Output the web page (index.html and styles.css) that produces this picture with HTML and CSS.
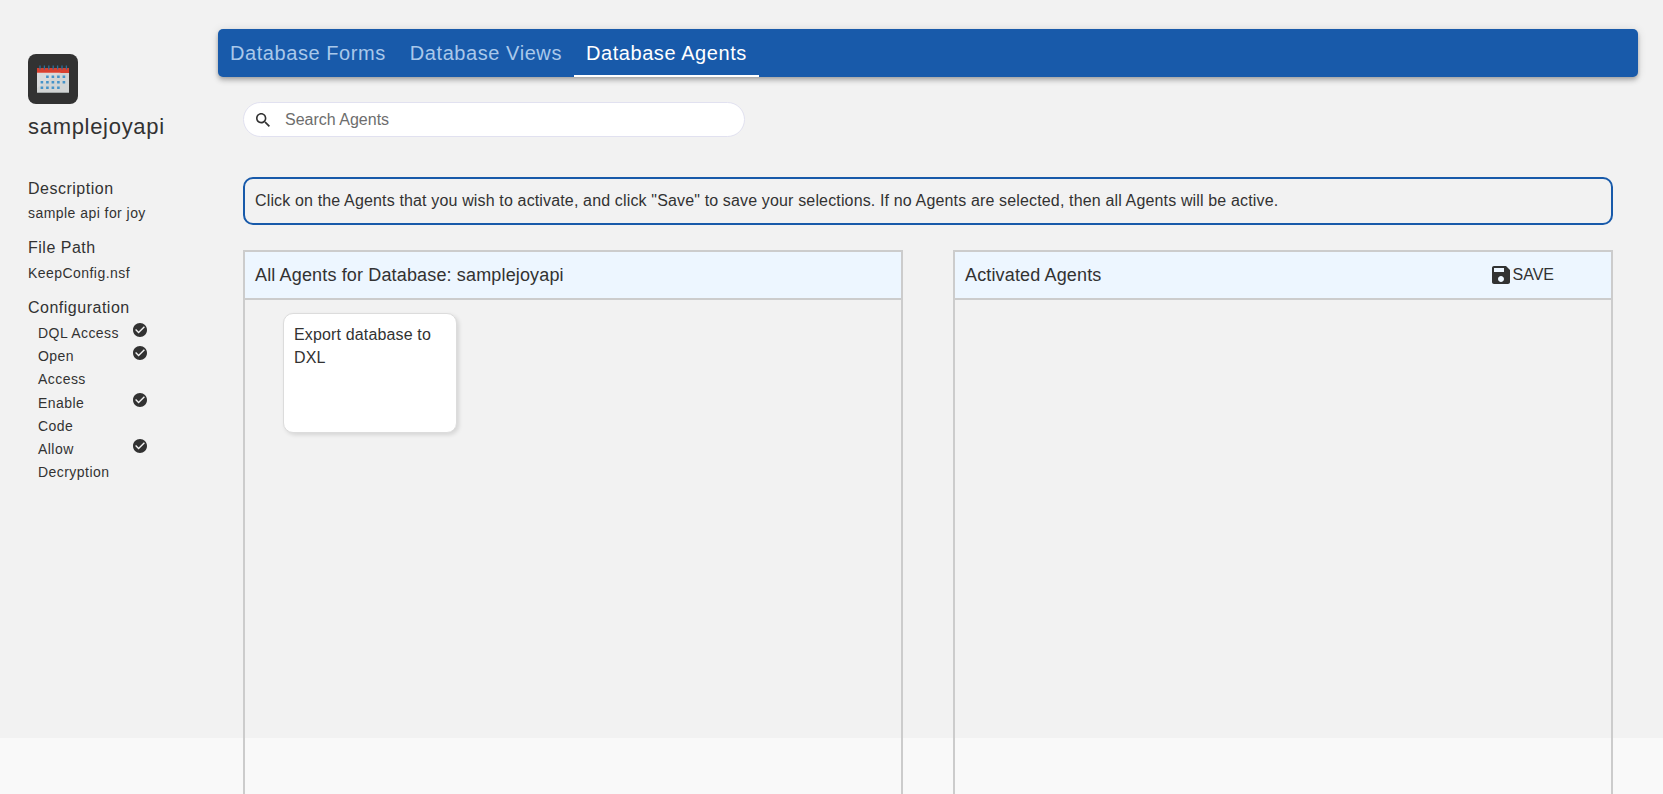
FILE: index.html
```html
<!DOCTYPE html>
<html lang="en">
<head>
<meta charset="utf-8">
<title>Database Agents</title>
<link rel="stylesheet" href="styles.css">
</head>
<body>
<div class="page">
  <aside class="sidebar">
    <div class="app-icon">
      <svg viewBox="0 0 32 28" width="32" height="28">
        <path fill="#dadbdc" d="M0 7h32v20H0z"/>
        <path fill="#cdcecf" d="M24 7h8v20H0v-4z" opacity=".6"/>
        <path fill="#d9402f" d="M0 3h32v5H0z"/>
        <path fill="#e2685b" d="M0 7h24l-1 1H0z"/>
        <path fill="#a3a8a8" d="M0 27h32v1H0z"/>
        <path stroke="#2c6f9c" stroke-width="1.3" d="M3 .5v4M7.4 .5v4M11.8 .5v4M16.2 .5v4M20.6 .5v4M25 .5v4M29.4 .5v4"/>
        <path stroke="#4593c9" stroke-width="2.6" stroke-dasharray="2.6 2.9" d="M9.1 11.8H29M3.6 17.3H29M3.6 22.8H23"/>
      </svg>
    </div>
    <h1 class="app-name">samplejoyapi</h1>
    <h2 class="label">Description</h2>
    <p class="value description">sample api for joy</p>
    <h2 class="label">File Path</h2>
    <p class="value">KeepConfig.nsf</p>
    <h2 class="label">Configuration</h2>
    <ul class="config">
      <li><span>DQL Access</span><svg class="check" viewBox="2 2 20 20"><path d="M12 2C6.48 2 2 6.48 2 12s4.48 10 10 10 10-4.48 10-10S17.52 2 12 2zm-2 15l-5-5 1.41-1.41L10 14.17l7.59-7.59L19 8l-9 9z"/></svg></li>
      <li><span>Open Access</span><svg class="check" viewBox="2 2 20 20"><path d="M12 2C6.48 2 2 6.48 2 12s4.48 10 10 10 10-4.48 10-10S17.52 2 12 2zm-2 15l-5-5 1.41-1.41L10 14.17l7.59-7.59L19 8l-9 9z"/></svg></li>
      <li><span>Enable Code</span><svg class="check" viewBox="2 2 20 20"><path d="M12 2C6.48 2 2 6.48 2 12s4.48 10 10 10 10-4.48 10-10S17.52 2 12 2zm-2 15l-5-5 1.41-1.41L10 14.17l7.59-7.59L19 8l-9 9z"/></svg></li>
      <li><span>Allow Decryption</span><svg class="check" viewBox="2 2 20 20"><path d="M12 2C6.48 2 2 6.48 2 12s4.48 10 10 10 10-4.48 10-10S17.52 2 12 2zm-2 15l-5-5 1.41-1.41L10 14.17l7.59-7.59L19 8l-9 9z"/></svg></li>
    </ul>
  </aside>
  <main class="main">
    <nav class="tabs">
      <a class="tab">Database Forms</a>
      <a class="tab">Database Views</a>
      <a class="tab tab-active">Database Agents</a>
    </nav>
    <div class="content">
      <div class="search">
        <svg class="search-icon" viewBox="3 3 17.5 17.5"><path d="M15.5 14h-.79l-.28-.27C15.41 12.59 16 11.11 16 9.5 16 5.91 13.09 3 9.5 3S3 5.91 3 9.5 5.91 16 9.5 16c1.61 0 3.09-.59 4.23-1.57l.27.28v.79l5 4.99L20.49 19l-4.99-5zm-6 0C7.01 14 5 11.99 5 9.5S7.01 5 9.5 5 14 7.01 14 9.5 11.99 14 9.5 14z"/></svg>
        <span>Search Agents</span>
      </div>
      <p class="notice">Click on the Agents that you wish to activate, and click "Save" to save your selections. If no Agents are selected, then all Agents will be active.</p>
      <div class="panels">
        <section class="panel">
          <header class="panel-head"><span class="panel-title">All Agents for Database: samplejoyapi</span></header>
          <div class="panel-body"><div class="card">Export database to DXL</div></div>
        </section>
        <section class="panel">
          <header class="panel-head">
            <span class="panel-title">Activated Agents</span>
            <span class="save"><svg class="save-icon" viewBox="3 3 18 18"><path d="M17 3H5c-1.11 0-2 .9-2 2v14c0 1.1.89 2 2 2h14c1.1 0 2-.9 2-2V7l-4-4zm-5 16c-1.66 0-3-1.34-3-3s1.34-3 3-3 3 1.34 3 3-1.34 3-3 3zm3-10H5V5h10v4z"/></svg>SAVE</span>
          </header>
          <div class="panel-body"></div>
        </section>
      </div>
    </div>
  </main>
</div>
</body>
</html>
```

FILE: styles.css
```css
* { box-sizing: border-box; margin: 0; padding: 0; }
body {
  height: 794px;
  overflow: hidden;
  background: #f9f9f9;
  color: #323232;
  font-family: "Liberation Sans", Arial, sans-serif;
  font-size: 16px;
}
.page { display: flex; height: 738px; background: #f2f2f2; }
.sidebar { width: 218px; padding: 54px 28px 0; letter-spacing: .45px; }
.app-icon {
  display: flex;
  align-items: center;
  justify-content: center;
  width: 50px;
  height: 50px;
  border-radius: 8px;
  background: #323232;
}
.app-name { margin: 9px 0 35px; font-size: 22px; font-weight: 400; line-height: 28px; letter-spacing: .7px; }
.label { font-size: 16px; font-weight: 400; line-height: 26px; letter-spacing: .5px; }
.value { margin-bottom: 10px; font-size: 14px; line-height: 24px; }
.description { margin-top: -1px; }
.config { padding: 1px 0 0 10px; list-style: none; font-size: 14px; line-height: 23.2px; }
.config li { display: flex; align-items: flex-start; }
.config span { width: 95px; padding-right: 10px; }
.check { width: 14px; height: 14px; margin-top: 1px; fill: #323232; }

.main { display: flex; flex-direction: column; width: 1420px; padding-top: 29px; }
.tabs {
  display: flex;
  flex: none;
  height: 48px;
  border-radius: 5px;
  background: #185aaa;
  box-shadow: 0 2px 4px -1px rgba(0,0,0,.2), 0 4px 5px 0 rgba(0,0,0,.14), 0 1px 10px 0 rgba(0,0,0,.12);
}
.tab {
  padding: 0 12px;
  border-bottom: 2px solid transparent;
  color: #a9c8ea;
  font-size: 20px;
  line-height: 48px;
  letter-spacing: .57px;
}
.tab-active { border-color: #fff; color: #fff; }
.content { padding: 25px 25px 0; }
.search {
  display: flex;
  align-items: center;
  width: 502px;
  height: 35px;
  padding-left: 12px;
  border: 1px solid #e1e1f0;
  border-radius: 18px;
  background: #fff;
  color: #6d6d6d;
}
.search-icon { width: 14px; height: 14px; margin-right: 15px; fill: #323232; }
.notice {
  height: 48px;
  margin: 40px 0 25px;
  padding-left: 10px;
  border: 2px solid #185aaa;
  border-radius: 10px;
  line-height: 44px;
  letter-spacing: .15px;
}
.panels { display: flex; gap: 50px; height: 560px; }
.panel { width: 660px; border: 2px solid #ccc; }
.panel-head {
  display: flex;
  align-items: center;
  justify-content: space-between;
  height: 48px;
  padding: 0 57px 0 10px;
  border-bottom: 2px solid #ccc;
  background: #edf6ff;
}
.panel-title { font-size: 18px; letter-spacing: .15px; }
.save { display: flex; align-items: center; gap: 3px; }
.save-icon { width: 18px; height: 18px; fill: #323232; }
.panel-body { padding: 13px 38px; }
.card {
  width: 174px;
  height: 120px;
  padding: 9px 10px;
  border: 1px solid #dcdcdc;
  border-radius: 10px;
  background: #fff;
  box-shadow: 2px 2px 4px rgba(0,0,0,.12);
  line-height: 23px;
  letter-spacing: .15px;
}
```
